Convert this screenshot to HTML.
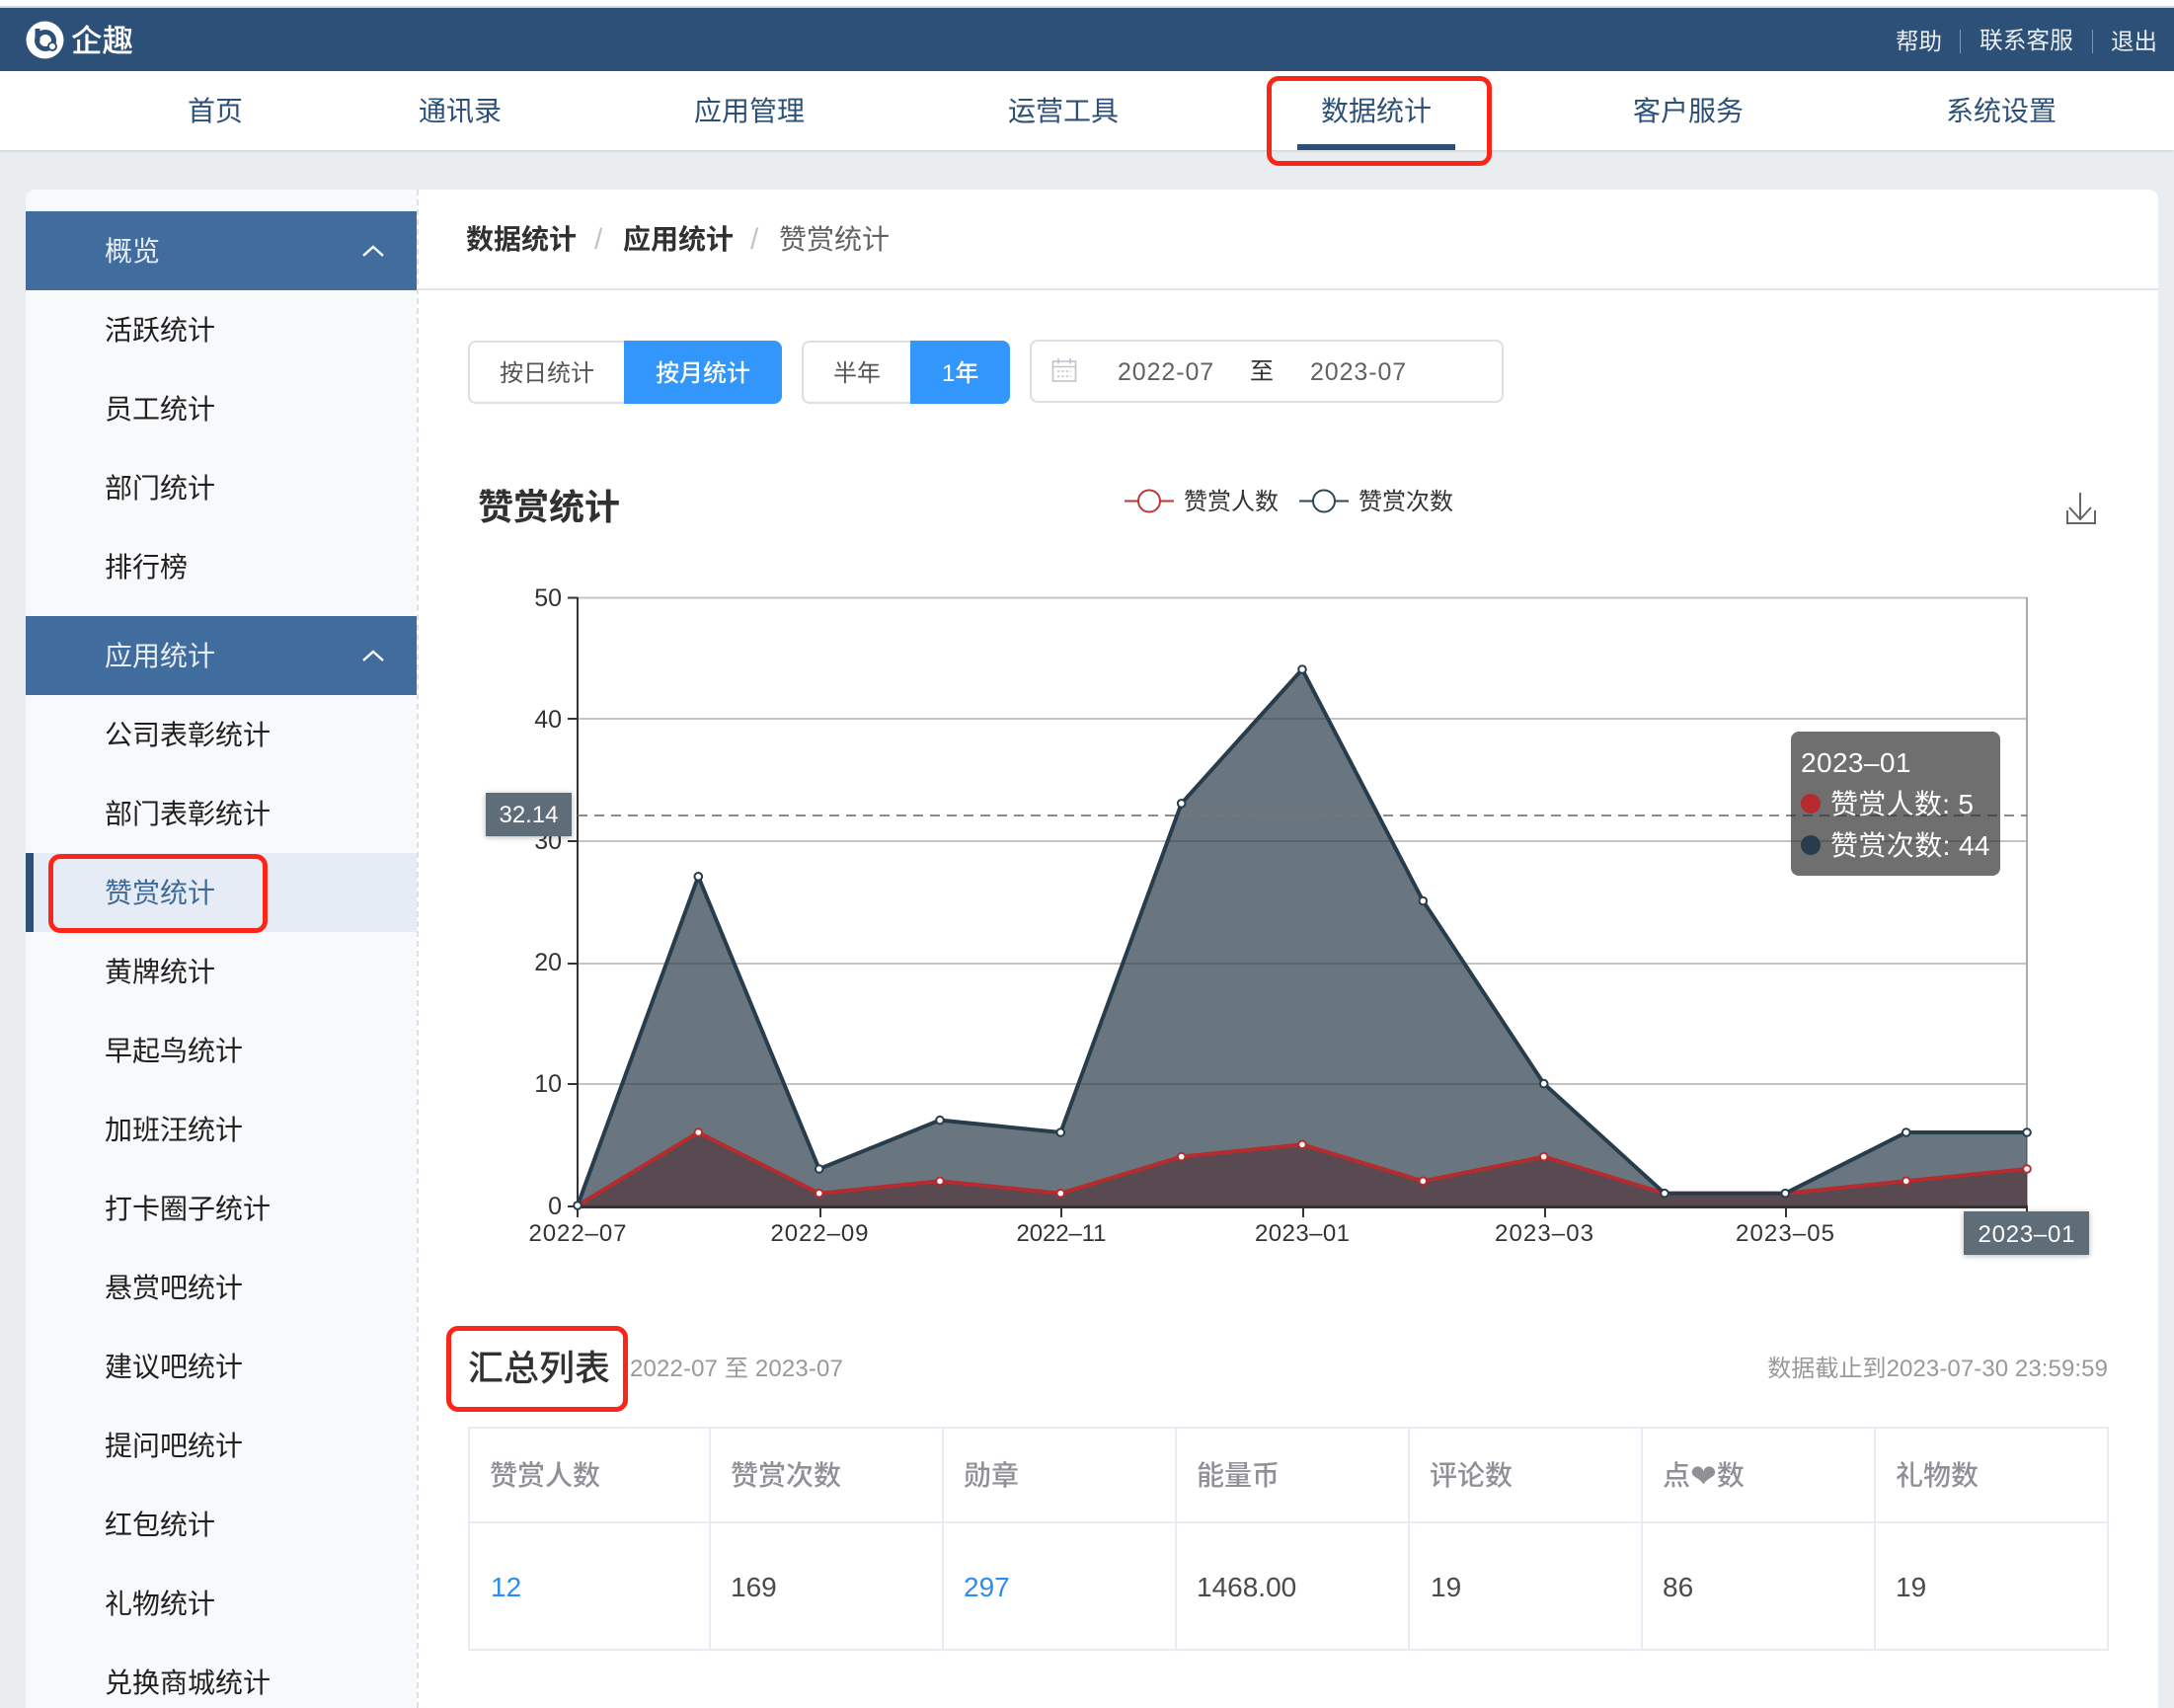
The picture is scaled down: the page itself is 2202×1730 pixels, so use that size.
<!DOCTYPE html>
<html lang="zh-CN"><head><meta charset="utf-8"><title>赞赏统计</title>
<style>
html,body{margin:0;padding:0;width:2202px;height:1730px;overflow:hidden;background:#eaedf0;font-family:"Liberation Sans","Noto Sans CJK SC",sans-serif;}
#root{position:absolute;left:0;top:0;width:2202px;height:1730px;overflow:hidden;background:#eaedf0;}
.a{position:absolute;white-space:nowrap;}
.t{position:absolute;white-space:nowrap;line-height:40px;height:40px;font-size:28px;margin-top:1px;}
.nav{color:#2d5078;top:92px;}
.side{left:106px;color:#1f1f1f;}
.sh{left:26px;width:396px;height:80px;background:#406c9e;position:absolute;}
.th{color:#8f9197;font-weight:500;top:1474px;}
.td{color:#4a4a4a;top:1587px;font-size:28px;}
.blue{color:#2d8cf0;}
.btn{font-size:24px;}
</style></head><body><div id="root">
<div class="a" style="left:0;top:0;width:2202px;height:6px;background:#fff"></div>
<div class="a" style="left:0;top:6px;width:2202px;height:2px;background:#d3d6da"></div>
<div class="a" style="left:0;top:8px;width:2202px;height:64px;background:#2d5078"></div>
<div class="a" style="left:0;top:72px;width:2202px;height:80px;background:#fff;box-shadow:0 1px 3px rgba(0,0,0,.14)"></div>

<svg class="a" style="left:26px;top:21px" width="40" height="40" viewBox="0 0 40 40"><circle cx="19.5" cy="19.5" r="19" fill="#fff"/><circle cx="20" cy="20" r="8.5" fill="none" stroke="#2d5078" stroke-width="5"/><path d="M12 8v13" stroke="#2d5078" stroke-width="5" fill="none"/><circle cx="27" cy="26" r="4" fill="#fff" stroke="#2d5078" stroke-width="2"/></svg>
<div class="t" style="left:72px;top:20px;font-size:31.5px;color:#fff;font-weight:500">企趣</div>
<div class="t" style="left:1920px;top:21px;font-size:23.5px;color:#e8edf2">帮助</div>
<div class="a" style="left:1985px;top:30px;width:1px;height:24px;background:#7f96ad"></div>
<div class="t" style="left:2005px;top:21px;font-size:23.7px;color:#e8edf2">联系客服</div>
<div class="a" style="left:2119px;top:30px;width:1px;height:24px;background:#7f96ad"></div>
<div class="t" style="left:2138px;top:21px;font-size:23.5px;color:#e8edf2">退出</div>

<div class="t nav" style="left:190px">首页</div>
<div class="t nav" style="left:424px">通讯录</div>
<div class="t nav" style="left:703px">应用管理</div>
<div class="t nav" style="left:1021px">运营工具</div>
<div class="t nav" style="left:1338px">数据统计</div>
<div class="t nav" style="left:1654px">客户服务</div>
<div class="t nav" style="left:1971px">系统设置</div>
<div class="a" style="left:1314px;top:146px;width:160px;height:6px;background:#2d5078"></div>
<div class="a" style="left:1283px;top:77px;width:228px;height:91px;box-sizing:border-box;border:5px solid #fb2518;border-radius:12px"></div>

<!-- card -->
<div class="a" style="left:26px;top:192px;width:2160px;height:1538px;background:#fff;border-radius:10px 10px 0 0;overflow:hidden">
  <div class="a" style="left:0;top:0;width:396px;height:1538px;background:#f8f9fb"></div>
  <div class="a" style="left:396px;top:0;width:0;height:1538px;border-left:2px dashed #dcdfe6"></div>
  <div class="a" style="left:398px;top:100px;width:1762px;height:2px;background:#e4e6ea"></div>
</div>

<!-- sidebar -->
<div class="sh" style="top:214px"></div>
<div class="sh" style="top:624px"></div>
<div class="t side" style="top:234px;color:#e8eef5">概览</div>
<svg class="a" style="left:366px;top:247px" width="24" height="14"><path d="M2 12L12 3L22 12" fill="none" stroke="#fff" stroke-width="2.4"/></svg>
<div class="t side" style="top:314px">活跃统计</div>
<div class="t side" style="top:394px">员工统计</div>
<div class="t side" style="top:474px">部门统计</div>
<div class="t side" style="top:554px">排行榜</div>
<div class="t side" style="top:644px;color:#e8eef5">应用统计</div>
<svg class="a" style="left:366px;top:657px" width="24" height="14"><path d="M2 12L12 3L22 12" fill="none" stroke="#fff" stroke-width="2.4"/></svg>
<div class="t side" style="top:724px">公司表彰统计</div>
<div class="t side" style="top:804px">部门表彰统计</div>
<div class="a" style="left:26px;top:864px;width:396px;height:80px;background:#e6ecf5"></div>
<div class="a" style="left:26px;top:864px;width:8px;height:80px;background:#2d5078"></div>
<div class="t side" style="top:884px;color:#3e6a9a">赞赏统计</div>
<div class="a" style="left:49px;top:865px;width:222px;height:80px;box-sizing:border-box;border:5px solid #fb2518;border-radius:12px"></div>
<div class="t side" style="top:964px">黄牌统计</div>
<div class="t side" style="top:1044px">早起鸟统计</div>
<div class="t side" style="top:1124px">加班汪统计</div>
<div class="t side" style="top:1204px">打卡圈子统计</div>
<div class="t side" style="top:1284px">悬赏吧统计</div>
<div class="t side" style="top:1364px">建议吧统计</div>
<div class="t side" style="top:1444px">提问吧统计</div>
<div class="t side" style="top:1524px">红包统计</div>
<div class="t side" style="top:1604px">礼物统计</div>
<div class="t side" style="top:1684px">兑换商城统计</div>

<!-- breadcrumb -->
<div class="t" style="left:472px;top:222px;font-weight:700;color:#303133">数据统计</div>
<div class="t" style="left:602px;top:222px;color:#c0c4cc;font-size:30px;font-weight:400">/</div>
<div class="t" style="left:631px;top:222px;font-weight:700;color:#303133">应用统计</div>
<div class="t" style="left:760px;top:222px;color:#c0c4cc;font-size:30px;font-weight:400">/</div>
<div class="t" style="left:789px;top:222px;color:#606266">赞赏统计</div>

<!-- toggles -->
<div class="a" style="left:474px;top:345px;width:159px;height:64px;box-sizing:border-box;border:2px solid #dcdfe6;border-right:0;border-radius:8px 0 0 8px;background:#fff"></div>
<div class="a" style="left:632px;top:345px;width:160px;height:64px;background:#3296fa;border-radius:0 8px 8px 0"></div>
<div class="t btn" style="left:506px;top:358px;color:#555">按日统计</div>
<div class="t btn" style="left:664px;top:358px;color:#fff;font-weight:500">按月统计</div>
<div class="a" style="left:812px;top:345px;width:111px;height:64px;box-sizing:border-box;border:2px solid #dcdfe6;border-right:0;border-radius:8px 0 0 8px;background:#fff"></div>
<div class="a" style="left:922px;top:345px;width:101px;height:64px;background:#3296fa;border-radius:0 8px 8px 0"></div>
<div class="t btn" style="left:844px;top:358px;color:#555">半年</div>
<div class="t btn" style="left:954px;top:358px;color:#fff;font-weight:500">1年</div>
<div class="a" style="left:1043px;top:344px;width:480px;height:64px;box-sizing:border-box;border:2px solid #dcdfe6;border-radius:8px;background:#fff"></div>
<svg class="a" style="left:1065px;top:362px" width="26" height="26" viewBox="0 0 26 26" fill="none" stroke="#c0c4cc" stroke-width="1.6"><rect x="1.5" y="4" width="23" height="20"/><path d="M1.5 9.5H24.5M7 1V6.5M19 1V6.5"/><path d="M6 14H20M6 19H20" stroke-dasharray="2.4 2"/></svg>
<div class="t" style="left:1132px;top:356px;font-size:25px;letter-spacing:.9px;color:#606266">2022-07</div>
<div class="t btn" style="left:1266px;top:356px;color:#333">至</div>
<div class="t" style="left:1327px;top:356px;font-size:25px;letter-spacing:.9px;color:#606266">2023-07</div>

<!-- chart title / legend -->
<div class="t" style="left:484px;top:493px;font-size:36px;font-weight:700;color:#303133">赞赏统计</div>
<div class="t btn" style="left:1199px;top:488px;color:#333">赞赏人数</div>
<div class="t btn" style="left:1376px;top:488px;color:#333">赞赏次数</div>

<svg class="a" style="left:0;top:0" width="2202" height="1730" viewBox="0 0 2202 1730" font-family="'Liberation Sans','Noto Sans CJK SC',sans-serif">
  <g fill="none" stroke-width="2">
    <path d="M1139 507.5H1153M1175 507.5H1189" stroke="#c23531"/><circle cx="1164" cy="507.5" r="11" stroke="#c23531" fill="#fff"/>
    <path d="M1316 507.5H1330M1352 507.5H1366" stroke="#2f4554"/><circle cx="1341" cy="507.5" r="11" stroke="#2f4554" fill="#fff"/>
  </g>
  <path d="M2107 499V526M2096 514L2107 526L2118 514M2094 517V530H2122V517" fill="none" stroke="#666" stroke-width="2"/>
  <!-- grid -->
  <g stroke="#c4c4c4" stroke-width="2">
    <path d="M585 605.5H2053M585 728H2053M585 852H2053M585 976H2053M585 1098H2053"/>
  </g>
  <path d="M2053 605V1222" stroke="#aaa" stroke-width="2"/>
  <!-- areas -->
  <g transform="translate(0,-1)">
  <path d="M585 1222L707.3 1148L829.7 1209.7L952 1197.3L1074.3 1209.7L1196.7 1172.6L1319 1160.3L1441.3 1197.3L1563.7 1172.6L1686 1209.7L1808.3 1209.7L1930.7 1197.3L2053 1185V1222Z" fill="#ac2c26" fill-opacity=".7"/>
  <path d="M585 1222L707.3 888.8L829.7 1185L952 1135.6L1074.3 1148L1196.7 814.8L1319 679L1441.3 913.5L1563.7 1098.6L1686 1209.7L1808.3 1209.7L1930.7 1148L2053 1148V1222Z" fill="#2b3c49" fill-opacity=".7"/>
  </g>
  <!-- axes -->
  <path d="M585 605V1223" stroke="#333" stroke-width="2"/>
  <path d="M584 1222.5H2054" stroke="#333" stroke-width="3"/>
  <g stroke="#333" stroke-width="2">
    <path d="M575 605.5H585M575 728H585M575 852H585M575 976H585M575 1098H585M575 1222H585"/>
    <path d="M585 1222V1233M831 1222V1233M1075 1222V1233M1320 1222V1233M1565 1222V1233M1809 1222V1233M2053 1222V1233"/>
  </g>
  <path d="M585 826H2053" stroke="#777" stroke-width="2" stroke-dasharray="10 7" opacity=".85"/>
  <!-- lines -->
  <g transform="translate(0,-1)">
  <polyline fill="none" stroke="#b52b2e" stroke-width="4" points="585,1222 707.3,1148 829.7,1209.7 952,1197.3 1074.3,1209.7 1196.7,1172.6 1319,1160.3 1441.3,1197.3 1563.7,1172.6 1686,1209.7 1808.3,1209.7 1930.7,1197.3 2053,1185"/>
  <polyline fill="none" stroke="#283d4c" stroke-width="4" points="585,1222 707.3,888.8 829.7,1185 952,1135.6 1074.3,1148 1196.7,814.8 1319,679 1441.3,913.5 1563.7,1098.6 1686,1209.7 1808.3,1209.7 1930.7,1148 2053,1148"/>
  <g fill="#fff" stroke="#b52b2e" stroke-width="2">
    <circle cx="707.3" cy="1148" r="3.8"/><circle cx="829.7" cy="1209.7" r="3.8"/><circle cx="952" cy="1197.3" r="3.8"/><circle cx="1074.3" cy="1209.7" r="3.8"/><circle cx="1196.7" cy="1172.6" r="3.8"/><circle cx="1319" cy="1160.3" r="3.8"/><circle cx="1441.3" cy="1197.3" r="3.8"/><circle cx="1563.7" cy="1172.6" r="3.8"/><circle cx="1930.7" cy="1197.3" r="3.8"/><circle cx="2053" cy="1185" r="3.8"/>
  </g>
  <g fill="#fff" stroke="#283d4c" stroke-width="2">
    <circle cx="585" cy="1222" r="3.8"/><circle cx="707.3" cy="888.8" r="3.8"/><circle cx="829.7" cy="1185" r="3.8"/><circle cx="952" cy="1135.6" r="3.8"/><circle cx="1074.3" cy="1148" r="3.8"/><circle cx="1196.7" cy="814.8" r="3.8"/><circle cx="1319" cy="679" r="3.8"/><circle cx="1441.3" cy="913.5" r="3.8"/><circle cx="1563.7" cy="1098.6" r="3.8"/><circle cx="1686" cy="1209.7" r="3.8"/><circle cx="1808.3" cy="1209.7" r="3.8"/><circle cx="1930.7" cy="1148" r="3.8"/><circle cx="2053" cy="1148" r="3.8"/>
  </g>
  </g>
  <!-- axis labels -->
  <g font-size="25" fill="#333" text-anchor="end">
    <text x="569" y="614">50</text><text x="569" y="737">40</text><text x="569" y="860">30</text><text x="569" y="983">20</text><text x="569" y="1106">10</text><text x="569" y="1230">0</text>
  </g>
  <g font-size="24" fill="#333" text-anchor="middle">
    <text x="585" y="1257" textLength="99">2022–07</text><text x="830" y="1257" textLength="99">2022–09</text><text x="1075" y="1257" textLength="91">2022–11</text><text x="1319" y="1257" textLength="96">2023–01</text><text x="1564" y="1257" textLength="100">2023–03</text><text x="1808" y="1257" textLength="100">2023–05</text>
  </g>
  <rect x="492" y="803" width="87" height="44" fill="#5f6d79" style="filter:drop-shadow(0 1px 3px rgba(0,0,0,.3))"/>
  <text x="535.5" y="833" font-size="24" fill="#fff" text-anchor="middle">32.14</text>
  <rect x="1989" y="1227" width="127" height="44" fill="#5f6d79" style="filter:drop-shadow(0 1px 3px rgba(0,0,0,.3))"/>
  <text x="2052.5" y="1258" font-size="24" fill="#fff" text-anchor="middle" textLength="98">2023–01</text>
</svg>

<!-- tooltip -->
<div class="a" style="left:1814px;top:741px;width:212px;height:146px;border-radius:8px;background:rgba(50,50,50,.7)"></div>
<div class="t" style="left:1824px;top:752px;color:#fff;letter-spacing:.4px">2023–01</div>
<div class="a" style="left:1824px;top:804px;width:20px;height:20px;border-radius:50%;background:#b52b2e"></div>
<div class="a" style="left:1824px;top:846px;width:20px;height:20px;border-radius:50%;background:#283d4c"></div>
<div class="t" style="left:1854px;top:794px;color:#fff;letter-spacing:.3px">赞赏人数: 5</div>
<div class="t" style="left:1854px;top:836px;color:#fff;letter-spacing:.4px">赞赏次数: 44</div>

<!-- summary -->
<div class="t" style="left:474px;top:1365px;font-size:36px;font-weight:500;color:#303133">汇总列表</div>
<div class="a" style="left:452px;top:1343px;width:184px;height:87px;box-sizing:border-box;border:5px solid #fb2518;border-radius:12px"></div>
<div class="t" style="left:638px;top:1366px;font-size:24px;letter-spacing:.15px;color:#999">2022-07 至 2023-07</div>
<div class="t" style="right:67px;top:1366px;font-size:24px;letter-spacing:.08px;color:#999">数据截止到2023-07-30 23:59:59</div>

<div class="a" style="left:474px;top:1445px;width:1662px;height:227px;box-sizing:border-box;border:2px solid #e8eaf4"></div>
<div class="a" style="left:474px;top:1541px;width:1662px;height:2px;background:#e8eaf4"></div>
<div class="a" style="left:718px;top:1445px;width:2px;height:227px;background:#e8eaf4"></div>
<div class="a" style="left:954px;top:1445px;width:2px;height:227px;background:#e8eaf4"></div>
<div class="a" style="left:1190px;top:1445px;width:2px;height:227px;background:#e8eaf4"></div>
<div class="a" style="left:1426px;top:1445px;width:2px;height:227px;background:#e8eaf4"></div>
<div class="a" style="left:1662px;top:1445px;width:2px;height:227px;background:#e8eaf4"></div>
<div class="a" style="left:1898px;top:1445px;width:2px;height:227px;background:#e8eaf4"></div>

<div class="t th" style="left:496px">赞赏人数</div>
<div class="t th" style="left:740px">赞赏次数</div>
<div class="t th" style="left:976px">勋章</div>
<div class="t th" style="left:1212px">能量币</div>
<div class="t th" style="left:1448px">评论数</div>
<div class="t th" style="left:1684px">点<span style="font-size:32px;line-height:28px;vertical-align:-2px">❤</span>数</div>
<div class="t th" style="left:1920px">礼物数</div>

<div class="t td blue" style="left:497px">12</div>
<div class="t td" style="left:740px">169</div>
<div class="t td blue" style="left:976px">297</div>
<div class="t td" style="left:1212px">1468.00</div>
<div class="t td" style="left:1449px">19</div>
<div class="t td" style="left:1684px">86</div>
<div class="t td" style="left:1920px">19</div>
</div></body></html>
